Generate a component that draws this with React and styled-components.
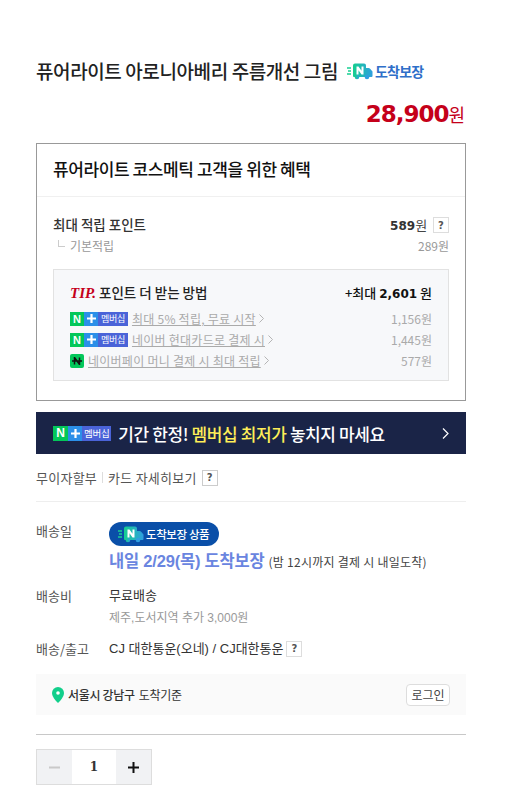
import React from 'react';
import styled, { createGlobalStyle } from 'styled-components';

const GlobalStyle = createGlobalStyle`
  html, body { margin: 0; padding: 0; background: #fff; }
  body { font-family: "Noto Sans CJK KR", "Noto Sans", sans-serif; color: #222; }
`;

function ChevronSmall() {
  return (
    <Chevron width="5" height="9" viewBox="0 0 5 9">
      <path d="M0.5 0.5 L4.500 4.500 L0.5 8.500" fill="none" stroke="#b5b5b5" strokeWidth="1" />
    </Chevron>
  );
}

function Truck({ size = 'normal' }) {
  return (
    <svg width="26" height="17" viewBox="0 0 26 17">
      <defs>
        <linearGradient id={`truck-${size}`} x1="0" x2="1" y1="0" y2="0">
          <stop offset="0" stopColor="#15cf8f" />
          <stop offset="1" stopColor="#2f9ee0" />
        </linearGradient>
      </defs>
      <path d="M0 5h4M1 8h3M0 11h4" stroke="#19cf92" strokeWidth="1.5" />
      <path d="M6 2.500a2 2 0 0 1 2-2h9a2 2 0 0 1 2 2V5h2.500a2 2 0 0 1 1.600.8L25.500 8.500V13a1 1 0 0 1-1 1H7a1 1 0 0 1-1-1z" fill={`url(#truck-${size})`} />
      <circle cx="10" cy="14" r="2.300" fill={`url(#truck-${size})`} />
      <circle cx="20" cy="14" r="2.300" fill="#2f9ee0" />
      <path d="M9.500 3.500v8h2V7.200l3 4.300h2v-8h-2v4.300l-3-4.300z" fill="#fff" />
    </svg>
  );
}

function MembershipBadge({ banner }) {
  return (
    <Badge $banner={banner}>
      <BadgeN $banner={banner}>N</BadgeN>
      <BadgePlus $banner={banner}>
        <svg width="9" height="9" viewBox="0 0 9 9">
          <path d="M4.500 0v9M0 4.500h9" stroke="#fff" strokeWidth="2.200" />
        </svg>
      </BadgePlus>
      <BadgeLabel $banner={banner}>멤버십</BadgeLabel>
    </Badge>
  );
}

function PayIcon() {
  return (
    <PaySquare>
      <svg width="10" height="8" viewBox="0 0 10 8">
        <path d="M0 4h10M2.500 7.500V.5L7.500 7.500V.5" fill="none" stroke="#111" strokeWidth="1.500" />
      </svg>
    </PaySquare>
  );
}

export default function App() {
  return (
    <Page>
      <GlobalStyle />
      <TitleRow>
        <Title>퓨어라이트 아로니아베리 주름개선 그림</Title>
        <TruckMark>
          <Truck />
          <TruckText>도착보장</TruckText>
        </TruckMark>
      </TitleRow>
      <PriceRow>
        <PriceNumber>28,900</PriceNumber>
        <PriceUnit>원</PriceUnit>
      </PriceRow>

      <BenefitBox>
        <BenefitHeader>퓨어라이트 코스메틱 고객을 위한 혜택</BenefitHeader>
        <BenefitBody>
          <PointRow>
            <PointLabel>최대 적립 포인트</PointLabel>
            <PointValue>
              <b>589</b>원 <Help>?</Help>
            </PointValue>
          </PointRow>
          <BaseRow>
            <BaseLabel>
              <Elbow />
              기본적립
            </BaseLabel>
            <span>289원</span>
          </BaseRow>
          <TipBox>
            <TipHead>
              <TipTitle>
                <TipMark>TIP.</TipMark>포인트 더 받는 방법
              </TipTitle>
              <TipTotal>
                +최대 <b>2,601</b> 원
              </TipTotal>
            </TipHead>
            <TipRow>
              <TipLeft>
                <MembershipBadge />
                <TipLink>최대 5% 적립, 무료 시작</TipLink>
                <ChevronSmall />
              </TipLeft>
              <span>1,156원</span>
            </TipRow>
            <TipRow>
              <TipLeft>
                <MembershipBadge />
                <TipLink>네이버 현대카드로 결제 시</TipLink>
                <ChevronSmall />
              </TipLeft>
              <span>1,445원</span>
            </TipRow>
            <TipRow>
              <TipLeft>
                <PayIcon />
                <TipLink>네이버페이 머니 결제 시 최대 적립</TipLink>
                <ChevronSmall />
              </TipLeft>
              <span>577원</span>
            </TipRow>
          </TipBox>
        </BenefitBody>
      </BenefitBox>

      <Banner>
        <BannerLeft>
          <MembershipBadge banner />
          <BannerText>
            기간 한정! <em>멤버십 최저가</em> 놓치지 마세요
          </BannerText>
        </BannerLeft>
        <svg width="7" height="11" viewBox="0 0 7 11">
          <path d="M1 .5l5 5-5 5" fill="none" stroke="#fff" strokeWidth="1.200" />
        </svg>
      </Banner>

      <CardRow>
        <span>무이자할부</span>
        <CardDivider />
        <span>카드 자세히보기</span>
        <HelpLarge>?</HelpLarge>
      </CardRow>

      <Delivery>
        <InfoRow $top={19}>
          <InfoLabel>배송일</InfoLabel>
          <InfoValue>
            <GuaranteePill>
              <Truck size="small" />
              도착보장 상품
            </GuaranteePill>
            <ArrivalLine>
              <ArrivalDate>내일 2/29(목) 도착보장</ArrivalDate>
              <ArrivalNote>(밤 12시까지 결제 시 내일도착)</ArrivalNote>
            </ArrivalLine>
          </InfoValue>
        </InfoRow>
        <InfoRow $top={12}>
          <InfoLabel>배송비</InfoLabel>
          <InfoValue>
            <ValueText>무료배송</ValueText>
            <SubText>제주,도서지역 추가 3,000원</SubText>
          </InfoValue>
        </InfoRow>
        <InfoRow $top={12}>
          <InfoLabel>배송/출고</InfoLabel>
          <InfoValue>
            <ValueText>
              CJ 대한통운(오네) / CJ대한통운<Help>?</Help>
            </ValueText>
          </InfoValue>
        </InfoRow>
      </Delivery>

      <LocationBar>
        <LocationText>
          <svg width="12" height="16" viewBox="0 0 12 16">
            <path d="M6 0a6 6 0 0 1 6 6c0 3.500-3.500 7.500-6 10C3.500 13.500 0 9.500 0 6a6 6 0 0 1 6-6z" fill="#12cf8b" />
            <circle cx="6" cy="6" r="1.800" fill="#fff" />
          </svg>
          <strong>서울시 강남구</strong> 도착기준
        </LocationText>
        <LoginButton>로그인</LoginButton>
      </LocationBar>

      <Rule />

      <Stepper>
        <StepButton $off>
          <svg width="11" height="11" viewBox="0 0 11 11">
            <path d="M0 5.500h11" stroke="#c9c9c9" strokeWidth="2" />
          </svg>
        </StepButton>
        <Qty>1</Qty>
        <StepButton>
          <svg width="11" height="11" viewBox="0 0 11 11">
            <path d="M0 5.500h11M5.500 0v11" stroke="#111" strokeWidth="2" />
          </svg>
        </StepButton>
      </Stepper>
    </Page>
  );
}

const Page = styled.div`
  width: 430px;
  height: 803px;
  overflow: hidden;
  box-sizing: border-box;
  margin-left: 36px;
  padding-top: 58px;
`;

const TitleRow = styled.div`
  display: flex;
  align-items: center;
  height: 26px;
`;

const Title = styled.h1`
  margin: 0;
  font-size: 19px;
  font-weight: 500;
  line-height: 26px;
  letter-spacing: -0.4px;
  color: #222;
`;

const TruckMark = styled.span`
  display: flex;
  align-items: center;
  gap: 2px;
  margin-left: 9px;
`;

const TruckText = styled.span`
  font-size: 14px;
  font-weight: 700;
  letter-spacing: -0.8px;
  color: #2f6fc9;
`;

const PriceRow = styled.div`
  display: flex;
  justify-content: flex-end;
  align-items: baseline;
  height: 34px;
  margin-top: 13px;
  padding-right: 1px;
  color: #c5001a;
`;

const PriceNumber = styled.span`
  font-family: "DejaVu Sans", sans-serif;
  font-size: 23px;
  font-weight: 700;
  letter-spacing: -1px;
  line-height: 34px;
`;

const PriceUnit = styled.span`
  font-size: 18px;
  line-height: 34px;
`;

const BenefitBox = styled.section`
  box-sizing: border-box;
  height: 258px;
  margin-top: 12px;
  border: 1px solid #999;
`;

const BenefitHeader = styled.h2`
  box-sizing: border-box;
  height: 53px;
  margin: 0;
  padding: 12px 16px 0;
  font-size: 17px;
  font-weight: 500;
  line-height: 26px;
  letter-spacing: -0.4px;
  color: #111;
  border-bottom: 1px solid #f0f0f0;
`;

const BenefitBody = styled.div`
  padding: 17px 16px 0;
`;

const PointRow = styled.div`
  display: flex;
  justify-content: space-between;
  align-items: center;
  height: 20px;
`;

const PointLabel = styled.span`
  font-size: 13.500px;
  font-weight: 500;
  color: #333;
`;

const PointValue = styled.span`
  font-size: 13px;
  color: #444;
  b {
    font-family: "DejaVu Sans", sans-serif;
    font-size: 12px;
    color: #333;
  }
`;

const Help = styled.span`
  display: inline-flex;
  align-items: center;
  justify-content: center;
  box-sizing: border-box;
  width: 16px;
  height: 16px;
  margin-left: 3px;
  border: 1px solid #ddd;
  font-family: "DejaVu Sans", sans-serif;
  font-size: 10px;
  font-weight: 700;
  color: #555;
  vertical-align: 1px;
`;

const HelpLarge = styled(Help)`
  margin-left: 5px;
  border-color: #ccc;
`;

const BaseRow = styled.div`
  display: flex;
  justify-content: space-between;
  align-items: center;
  height: 20px;
  margin-top: 1px;
  font-size: 12px;
  color: #999;
`;

const BaseLabel = styled.span`
  display: flex;
  align-items: center;
`;

const Elbow = styled.i`
  display: block;
  width: 6px;
  height: 6px;
  margin: -3px 5px 0 5px;
  border-left: 1px solid #ccc;
  border-bottom: 1px solid #ccc;
`;

const TipBox = styled.div`
  box-sizing: border-box;
  height: 112px;
  margin-top: 14px;
  padding: 10px 16px 0;
  border: 1px solid #e2e2e2;
  background: #f7f8fa;
`;

const TipHead = styled.div`
  display: flex;
  justify-content: space-between;
  align-items: center;
  height: 24px;
  margin-bottom: 4px;
`;

const TipTitle = styled.span`
  font-size: 13.500px;
  font-weight: 500;
  color: #222;
`;

const TipMark = styled.i`
  margin-right: 3px;
  font-family: "Liberation Serif", serif;
  font-size: 15px;
  font-weight: 700;
  color: #c5001a;
`;

const TipTotal = styled.span`
  font-size: 13px;
  font-weight: 500;
  color: #111;
  b {
    font-family: "DejaVu Sans", sans-serif;
    font-size: 12px;
  }
`;

const TipRow = styled.div`
  display: flex;
  justify-content: space-between;
  align-items: center;
  height: 21px;
  font-size: 12px;
  color: #aaa;
`;

const TipLeft = styled.div`
  display: flex;
  align-items: center;
`;

const TipLink = styled.span`
  margin-left: 4px;
  text-decoration: underline;
  letter-spacing: 0.25px;
`;

const Chevron = styled.svg`
  margin-left: 3px;
`;

const Badge = styled.span`
  display: flex;
  height: ${(p) => (p.$banner ? '15px' : '14px')};
  font-family: "Liberation Sans", sans-serif;
  color: #fff;
`;

const BadgeN = styled.span`
  display: flex;
  align-items: center;
  justify-content: center;
  width: ${(p) => (p.$banner ? '15px' : '14px')};
  background: #03c75a;
  font-size: ${(p) => (p.$banner ? '12px' : '11px')};
  font-weight: 700;
`;

const BadgePlus = styled.span`
  display: flex;
  align-items: center;
  justify-content: center;
  width: 14px;
  background: #2b8fe8;
`;

const BadgeLabel = styled.span`
  display: flex;
  align-items: center;
  padding: 0 ${(p) => (p.$banner ? '2px' : '3px')};
  background: #4a63d8;
  font-family: "Noto Sans CJK KR", sans-serif;
  font-size: ${(p) => (p.$banner ? '9.500px' : '9px')};
  letter-spacing: -0.3px;
`;

const PaySquare = styled.span`
  display: flex;
  align-items: center;
  justify-content: center;
  width: 14px;
  height: 14px;
  border-radius: 2px;
  background: #03c75a;
`;

const Banner = styled.div`
  display: flex;
  align-items: center;
  justify-content: space-between;
  box-sizing: border-box;
  height: 42px;
  margin-top: 11px;
  padding: 0 17px 0 17px;
  background: #1a2447;
`;

const BannerLeft = styled.div`
  display: flex;
  align-items: center;
  gap: 7px;
`;

const BannerText = styled.span`
  font-size: 17px;
  font-weight: 500;
  letter-spacing: -0.4px;
  color: #fff;
  em {
    font-style: normal;
    color: #ffee58;
  }
`;

const CardRow = styled.div`
  display: flex;
  align-items: center;
  height: 47px;
  border-bottom: 1px solid #eee;
  font-size: 13px;
  letter-spacing: 0.25px;
  color: #555;
`;

const CardDivider = styled.i`
  width: 1px;
  height: 11px;
  margin: 0 5px;
  background: #ddd;
`;

const Delivery = styled.div`
  display: flex;
  flex-direction: column;
`;

const InfoRow = styled.div`
  display: flex;
  margin-top: ${(p) => p.$top}px;
`;

const InfoLabel = styled.span`
  width: 73px;
  flex: none;
  font-size: 13px;
  line-height: 20px;
  color: #555;
`;

const InfoValue = styled.div`
  display: flex;
  flex-direction: column;
  align-items: flex-start;
`;

const GuaranteePill = styled.span`
  display: flex;
  align-items: center;
  gap: 2px;
  box-sizing: border-box;
  width: 110px;
  height: 24px;
  margin-top: 1px;
  padding-left: 9px;
  border-radius: 12px;
  background: #0a4fa8;
  font-size: 11.500px;
  font-weight: 500;
  letter-spacing: -0.4px;
  color: #fff;
`;

const ArrivalLine = styled.div`
  display: flex;
  align-items: baseline;
  gap: 4px;
  height: 26px;
  margin-top: 2px;
`;

const ArrivalDate = styled.span`
  font-family: "Liberation Sans", "Noto Sans CJK KR", sans-serif;
  font-size: 16.500px;
  font-weight: 700;
  line-height: 26px;
  color: #6a85e0;
  letter-spacing: -0.2px;
`;

const ArrivalNote = styled.span`
  font-size: 12px;
  color: #444;
  letter-spacing: 0.25px;
`;

const ValueText = styled.span`
  font-family: "Liberation Sans", "Noto Sans CJK KR", sans-serif;
  font-size: 13px;
  line-height: 20px;
  color: #333;
`;

const SubText = styled.span`
  font-family: "Liberation Sans", "Noto Sans CJK KR", sans-serif;
  margin-top: 3px;
  font-size: 12px;
  line-height: 18px;
  color: #999;
`;

const LocationBar = styled.div`
  display: flex;
  align-items: center;
  justify-content: space-between;
  box-sizing: border-box;
  height: 41px;
  margin-top: 15px;
  padding: 0 16px;
  background: #fafafa;
`;

const LocationText = styled.span`
  display: flex;
  align-items: center;
  gap: 4px;
  font-size: 12px;
  color: #333;
  letter-spacing: -0.3px;
  strong {
    font-weight: 500;
  }
`;

const LoginButton = styled.button`
  box-sizing: border-box;
  width: 44px;
  height: 22px;
  padding: 0;
  border: 1px solid #ddd;
  border-radius: 4px;
  background: #fff;
  font-family: inherit;
  font-size: 12px;
  color: #444;
`;

const Rule = styled.hr`
  height: 1px;
  margin: 19px 0 14px;
  border: 0;
  background: #c8c8c8;
`;

const Stepper = styled.div`
  display: flex;
  box-sizing: border-box;
  width: 116px;
  height: 36px;
  border: 1px solid #ddd;
`;

const StepButton = styled.span`
  display: flex;
  align-items: center;
  justify-content: center;
  width: 35px;
  background: #f1f2f4;
`;

const Qty = styled.span`
  flex: 1;
  text-align: center;
  font-family: "DejaVu Serif", serif;
  font-size: 12px;
  font-weight: 700;
  line-height: 34px;
  color: #333;
`;
